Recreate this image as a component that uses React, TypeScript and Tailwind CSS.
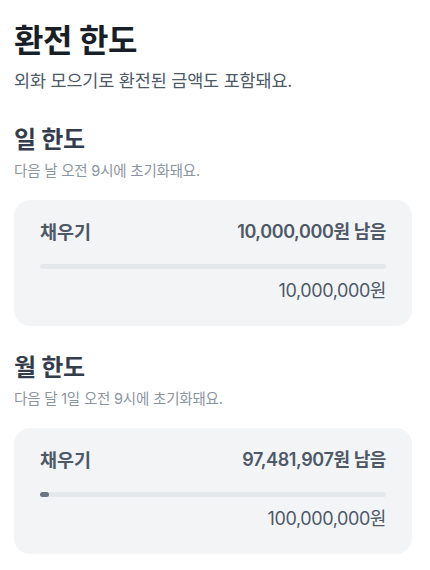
import React from 'react';

type Limit = {
  title: string;
  resetText: string;
  remaining: string;
  total: string;
  percent: number;
};

const LIMITS: Limit[] = [
  {
    title: '일 한도',
    resetText: '다음 날 오전 9시에 초기화돼요.',
    remaining: '10,000,000원 남음',
    total: '10,000,000원',
    percent: 0,
  },
  {
    title: '월 한도',
    resetText: '다음 달 1일 오전 9시에 초기화돼요.',
    remaining: '97,481,907원 남음',
    total: '100,000,000원',
    percent: 2.5,
  },
];

function LimitSection({ limit, first }: { limit: Limit; first: boolean }) {
  return (
    <section className={first ? 'mt-[30px]' : 'mt-[26px]'}>
      <h2 className="text-[24px] leading-[32px] font-bold text-[#333d4b] tracking-[-0.3px]">{limit.title}</h2>
      <p className="mt-[4px] text-[14.5px] leading-[22px] text-[#8b95a1] tracking-[-0.2px]">{limit.resetText}</p>

      {/* Card */}
      <div className="mt-[18px] w-[398px] rounded-[16px] bg-[#f2f4f6] px-[26px] pt-[19px] pb-[22px]">
        <div className="flex items-center justify-between">
          <span className="text-[18.5px] leading-[26px] font-semibold text-[#4e5968]">채우기</span>
          <span className="text-[18px] leading-[26px] font-semibold text-[#4e5968] tracking-[-0.4px]">{limit.remaining}</span>
        </div>
        <div className="mt-[19px] h-[5px] w-full rounded-full bg-[#e5e8eb]">
          {limit.percent > 0 && (
            <div className="h-full rounded-full bg-[#6b7684]" style={{ width: `${limit.percent}%` }} />
          )}
        </div>
        <div className="mt-[9px] text-right text-[18px] leading-[26px] text-[#4e5968] tracking-[-0.4px]">{limit.total}</div>
      </div>
    </section>
  );
}

export default function App() {
  return (
    <div
      className="w-[430px] h-[570px] overflow-hidden bg-white px-[14px] pt-[20px]"
      style={{ fontFamily: 'Inter, "Noto Sans CJK KR", sans-serif' }}
    >
      <h1 className="text-[32px] leading-[42px] font-bold text-[#191f28] tracking-[-0.5px]">환전 한도</h1>
      <p className="mt-[6px] text-[17.5px] leading-[26px] text-[#4e5968] tracking-[-0.2px]">외화 모으기로 환전된 금액도 포함돼요.</p>

      {LIMITS.map((limit, i) => (
        <LimitSection key={limit.title} limit={limit} first={i === 0} />
      ))}
    </div>
  );
}
